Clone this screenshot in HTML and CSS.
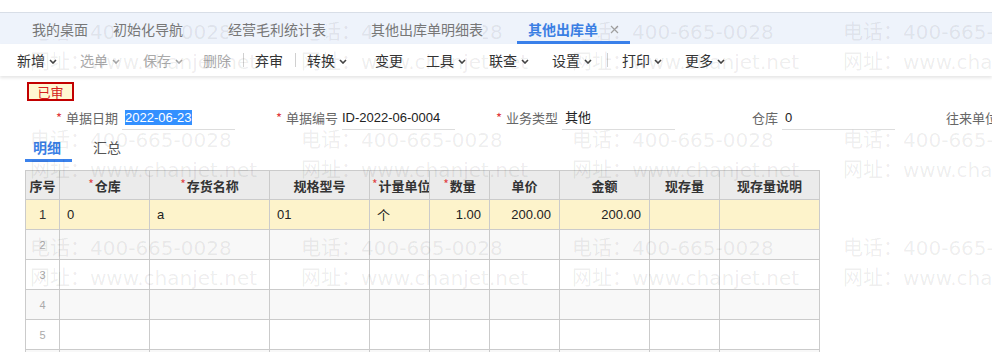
FILE: index.html
```html
<!DOCTYPE html>
<html lang="zh-CN">
<head>
    <meta charset="UTF-8">
    <title>其他出库单</title>
    <link rel="stylesheet" href="styles.css">
</head>
<body>
<div class="page">
    <div class="tabbar">
        <div class="tab first"><span>我的桌面</span></div>
        <div class="tab"><span>初始化导航</span></div>
        <div class="tab"><span>经营毛利统计表</span></div>
        <div class="tab"><span>其他出库单明细表</span></div>
        <div class="tab active"><span>其他出库单</span>
            <svg class="close" width="9" height="9" viewBox="0 0 9 9"><path d="M1 1L8 8M8 1L1 8" stroke="#a0a0a0" stroke-width="1.2" fill="none"/></svg>
        </div>
    </div>

    <div class="toolbar">
        <div class="tool">新增<svg class="caret" width="8" height="5" viewBox="0 0 8 5"><polyline points="1,1 4,4 7,1"/></svg></div>
        <div class="tool off">选单<svg class="caret" width="8" height="5" viewBox="0 0 8 5"><polyline points="1,1 4,4 7,1"/></svg></div>
        <div class="tool off">保存<svg class="caret" width="8" height="5" viewBox="0 0 8 5"><polyline points="1,1 4,4 7,1"/></svg></div>
        <div class="tool off tight">删除</div>
        <div class="sep"></div>
        <div class="tool">弃审</div>
        <div class="sep"></div>
        <div class="tool">转换<svg class="caret" width="8" height="5" viewBox="0 0 8 5"><polyline points="1,1 4,4 7,1"/></svg></div>
        <div class="tool wide">变更</div>
        <div class="tool">工具<svg class="caret" width="8" height="5" viewBox="0 0 8 5"><polyline points="1,1 4,4 7,1"/></svg></div>
        <div class="tool">联查<svg class="caret" width="8" height="5" viewBox="0 0 8 5"><polyline points="1,1 4,4 7,1"/></svg></div>
        <div class="tool">设置<svg class="caret" width="8" height="5" viewBox="0 0 8 5"><polyline points="1,1 4,4 7,1"/></svg></div>
        <div class="sep wide"></div>
        <div class="tool">打印<svg class="caret" width="8" height="5" viewBox="0 0 8 5"><polyline points="1,1 4,4 7,1"/></svg></div>
        <div class="tool">更多<svg class="caret" width="8" height="5" viewBox="0 0 8 5"><polyline points="1,1 4,4 7,1"/></svg></div>
    </div>

    <div class="content">
        <div class="stamp">已审</div>

        <div class="form-row">
            <div class="field">
                <label><i>*</i>单据日期</label>
                <div class="input"><span class="sel">2022-06-23</span></div>
            </div>
            <div class="field">
                <label><i>*</i>单据编号</label>
                <div class="input flush">ID-2022-06-0004</div>
            </div>
            <div class="field">
                <label><i>*</i>业务类型</label>
                <div class="input">其他</div>
            </div>
            <div class="field">
                <label>仓库</label>
                <div class="input">0</div>
            </div>
            <div class="field">
                <label>往来单位</label>
                <div class="input"></div>
            </div>
        </div>

        <div class="subtabs">
            <div class="subtab on">明细</div>
            <div class="subtab">汇总</div>
        </div>

        <table class="grid">
            <colgroup>
                <col style="width:34px"><col style="width:90px"><col style="width:120px"><col style="width:100px"><col style="width:60px">
                <col style="width:60px"><col style="width:70px"><col style="width:90px"><col style="width:70px"><col style="width:100px">
            </colgroup>
            <thead>
                <tr>
                    <th>序号</th>
                    <th><i>*</i>仓库</th>
                    <th><i>*</i>存货名称</th>
                    <th>规格型号</th>
                    <th><i>*</i>计量单位</th>
                    <th><i>*</i>数量</th>
                    <th>单价</th>
                    <th>金额</th>
                    <th>现存量</th>
                    <th>现存量说明</th>
                </tr>
            </thead>
            <tbody>
                <tr class="cur">
                    <td class="idx">1</td><td>0</td><td>a</td><td>01</td><td>个</td>
                    <td class="num">1.00</td><td class="num">200.00</td><td class="num">200.00</td><td></td><td></td>
                </tr>
                <tr class="alt"><td class="idx">2</td><td></td><td></td><td></td><td></td><td></td><td></td><td></td><td></td><td></td></tr>
                <tr><td class="idx">3</td><td></td><td></td><td></td><td></td><td></td><td></td><td></td><td></td><td></td></tr>
                <tr class="alt"><td class="idx">4</td><td></td><td></td><td></td><td></td><td></td><td></td><td></td><td></td><td></td></tr>
                <tr><td class="idx">5</td><td></td><td></td><td></td><td></td><td></td><td></td><td></td><td></td><td></td></tr>
                <tr class="alt"><td class="idx">6</td><td></td><td></td><td></td><td></td><td></td><td></td><td></td><td></td><td></td></tr>
            </tbody>
        </table>
    </div>

    <!-- 水印 -->
    <div class="watermark">
        <div class="wm"><div>电话：400-665-0028</div><div>网址：www.chanjet.net</div></div>
        <div class="wm"><div>电话：400-665-0028</div><div>网址：www.chanjet.net</div></div>
        <div class="wm"><div>电话：400-665-0028</div><div>网址：www.chanjet.net</div></div>
        <div class="wm"><div>电话：400-665-0028</div><div>网址：www.chanjet.net</div></div>
        <div class="wm"><div>电话：400-665-0028</div><div>网址：www.chanjet.net</div></div>
        <div class="wm"><div>电话：400-665-0028</div><div>网址：www.chanjet.net</div></div>
        <div class="wm"><div>电话：400-665-0028</div><div>网址：www.chanjet.net</div></div>
        <div class="wm"><div>电话：400-665-0028</div><div>网址：www.chanjet.net</div></div>
        <div class="wm"><div>电话：400-665-0028</div><div>网址：www.chanjet.net</div></div>
        <div class="wm"><div>电话：400-665-0028</div><div>网址：www.chanjet.net</div></div>
        <div class="wm"><div>电话：400-665-0028</div><div>网址：www.chanjet.net</div></div>
        <div class="wm"><div>电话：400-665-0028</div><div>网址：www.chanjet.net</div></div>
    </div>
</div>
</body>
</html>
```

FILE: styles.css
```css
* {
    box-sizing: border-box;
}
body {
    margin: 0;
    font-family: "Noto Sans CJK SC", sans-serif;
    color: #333;
    background: #fff;
}
.page {
    position: relative;
    width: 992px;
    height: 352px;
    overflow: hidden;
    padding-top: 12px;
}

/* 顶部页签 */
.tabbar {
    display: flex;
    height: 32px;
    padding-left: 21px;
    background: #eef3fb;
    border-top: 1px solid #d8dee7;
}
.tab {
    display: flex;
    align-items: center;
    padding: 4px 11px 0;
    margin-right: 23px;
    font-size: 14px;
    line-height: 20px;
    color: #777;
    border-bottom: 3px solid transparent;
}
.tab.first {
    margin-right: 3px;
}
.tab span {
    position: relative;
    z-index: 6;
    background: #eef3fb;
}
.tab.active {
    color: #3b7fe3;
    font-weight: bold;
    border-bottom-color: #3a80ea;
}
.tab .close {
    margin-left: 12px;
    margin-top: 1px;
}

/* 工具栏 */
.toolbar {
    display: flex;
    align-items: center;
    height: 32px;
    padding-left: 5.5px;
    background: #fff;
    box-shadow: 0 2px 3px rgba(0, 0, 0, 0.1);
    position: relative;
}
.tool {
    display: flex;
    align-items: center;
    padding: 0 11.5px;
    font-size: 14px;
    line-height: 20px;
    color: #333;
}
.tool.off {
    color: #aaa;
}
.tool.tight {
    margin-left: -3px;
}
.tool.wide {
    margin-left: 5px;
}
.caret {
    margin-left: 4px;
    margin-top: 2px;
}
.caret polyline {
    fill: none;
    stroke: currentColor;
    stroke-width: 1.6;
}
.tool:not(.off) .caret polyline {
    stroke: #444;
}
.sep {
    width: 1px;
    height: 14px;
    background: #d0d0d0;
}
.sep.wide {
    margin: 0 3px;
}

/* 表头区域 */
.content {
    padding-top: 6px;
}
.stamp {
    margin-left: 27px;
    width: 47px;
    height: 19px;
    border: 2px solid #c20000;
    background: #fff8d2;
    color: #d42020;
    font-size: 13px;
    line-height: 15px;
    text-align: center;
}
.form-row {
    display: flex;
    margin-top: 5px;
    padding-left: 16px;
    height: 24px;
}
.field {
    display: flex;
    flex-shrink: 0;
    width: 220px;
}
.field label {
    width: 106px;
    padding-right: 4px;
    text-align: right;
    font-size: 13px;
    line-height: 24px;
    color: #666;
    white-space: nowrap;
}
.field label i {
    font-style: normal;
    color: #e0393e;
    margin-right: 4px;
}
.input {
    width: 113px;
    height: 24px;
    padding-left: 3px;
    border-bottom: 1px solid #ddd;
    font-family: "Liberation Sans", "Noto Sans CJK SC", sans-serif;
    font-size: 13px;
    line-height: 23px;
    color: #222;
}
.input.flush {
    padding-left: 0;
}
.sel {
    background: #3390ff;
    color: #fff;
}

/* 明细/汇总 */
.subtabs {
    display: flex;
    margin: 7px 0 0 25px;
}
.subtab {
    padding: 0 11px 1px 8px;
    font-size: 14px;
    line-height: 21px;
    color: #555;
    border-bottom: 3px solid transparent;
}
.subtab + .subtab {
    margin-left: 13px;
}
.subtab.on {
    color: #3a7fe5;
    font-weight: bold;
    border-bottom-color: #3b82ec;
}

/* 明细表格 */
.grid {
    margin: 8px 0 0 25px;
    border-collapse: collapse;
    table-layout: fixed;
    width: 795px;
}
.grid th, .grid td {
    border: 1px solid #cbcbcb;
    padding: 0 7px;
    height: 30px;
    font-size: 13px;
    white-space: nowrap;
    overflow: hidden;
}
.grid th {
    height: 29px;
    background: #ebebeb;
    font-weight: bold;
    text-align: center;
    color: #333;
    padding: 0 2px;
}
.grid th i {
    font-style: normal;
    font-weight: normal;
    color: #e04040;
    font-size: 12px;
    position: relative;
    top: -2px;
    margin-right: 1px;
}
.grid td {
    font-family: "Liberation Sans", "Noto Sans CJK SC", sans-serif;
    color: #222;
}
.grid td.num {
    text-align: right;
    padding-right: 8px;
}
.grid td.idx {
    text-align: center;
    font-size: 11px;
    color: #aaa;
    padding: 0;
}
.grid tr.cur td {
    background: #fdf3cb;
}
.grid tr.cur td.idx {
    font-size: 13px;
    color: #333;
}
.grid tr.alt td {
    background: #f8f8f8;
}

/* 水印 */
.watermark {
    position: absolute;
    left: 0;
    top: 0;
    width: 100%;
    height: 100%;
    z-index: 5;
    pointer-events: none;
    display: grid;
    grid-template-columns: repeat(4, 271px);
    row-gap: 48px;
    align-content: start;
    padding: 17px 0 0 30px;
    font-family: "DejaVu Sans", "Noto Sans CJK SC", sans-serif;
    font-size: 20px;
    line-height: 30px;
    color: rgba(0, 0, 0, 0.075);
    white-space: nowrap;
}
```
